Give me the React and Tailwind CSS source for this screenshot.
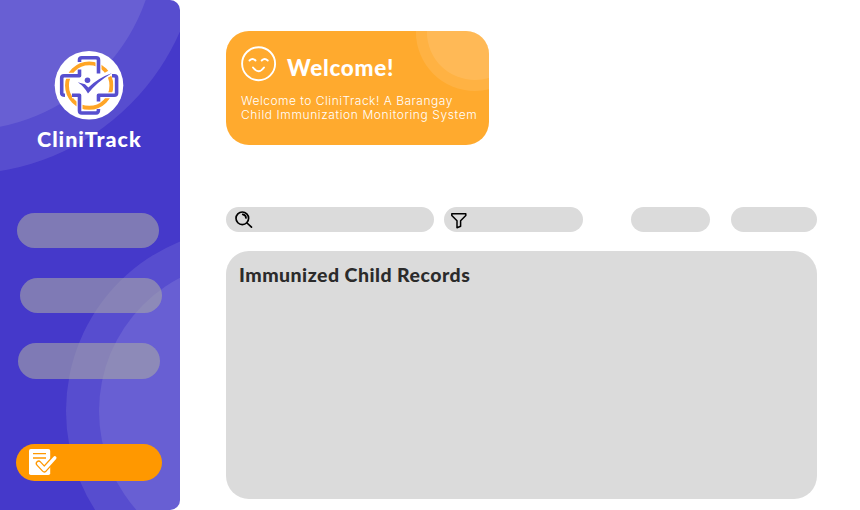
const heading = "font-[Lato,'Open_Sans',sans-serif]";

function Logo() {
  return (
    <svg className="block h-[70px] w-[70px]" viewBox="54 50 70 70" fill="none">
      <circle cx="89" cy="85.3" r="34.3" fill="#fff" />
      <circle cx="89.2" cy="85.6" r="22.2" stroke="#ffa526" strokeWidth="3.9" />
      <g stroke="#fff" strokeWidth="6">
        <path d="M79.5 71V75.8H62V95M98.5 58V73M116.5 76V95.3H98.5V99M72 95.3H79.5V113H98.5V110.5" />
        <path d="M98 80L112 72" />
      </g>
      <g stroke="#574fcf" strokeWidth="3.6" strokeLinejoin="round">
        <path d="M79.5 62V60Q79.5 57.7 81.8 57.7H96.2Q98.5 57.7 98.5 60V73.5" />
        <path d="M79.5 69.5V75.8H64Q61.7 75.8 61.7 78V93Q61.7 95.3 65 95.3" />
        <path d="M112 75.8H114.3Q116.6 75.8 116.6 78V93Q116.6 95.3 114.3 95.3H98.5V101.5" />
        <path d="M72 95.3H79.5V110.7Q79.5 113 81.8 113H96.2Q98.5 113 98.5 109" />
      </g>
      <circle cx="87.5" cy="80.2" r="2.8" fill="#574fcf" />
      <path d="M77.8 82.3L85 84.3L88.4 87.6Q97 78.5 112 73Q97 82 88 93.5Q84 86.5 77.8 82.3Z" fill="#574fcf" />
    </svg>
  );
}

function Sidebar() {
  return (
    <aside className="relative h-[510px] w-[180px] shrink-0 overflow-hidden rounded-r-[10px] bg-[#4539ca]">
      <svg className="absolute inset-0 h-full w-full" viewBox="0 0 180 510" fill="#fff" fillOpacity="0.1">
        <circle cx="-38" cy="-64" r="238" />
        <circle cx="-38" cy="-64" r="194.5" />
        <circle cx="249" cy="411" r="183" />
        <circle cx="249" cy="411" r="150" />
      </svg>
      <div className="relative flex flex-col pt-[50px]">
        <div className="ml-[54px]"><Logo /></div>
        <h1 className={`${heading} ml-[37px] mt-[5px] mb-px h-7 whitespace-nowrap text-[21.5px] leading-7 font-black tracking-[0.97px] text-white`}>CliniTrack</h1>
        <nav className="mt-[59px] flex flex-col">
          <div className="ml-[17px] h-[35px] w-[142px] rounded-full bg-[#a6a6a6]/60" />
          <div className="ml-[20px] mt-[30px] h-[35px] w-[142px] rounded-full bg-[#a6a6a6]/60" />
          <div className="ml-[18px] mt-[30px] h-[35.5px] w-[142px] rounded-full bg-[#a6a6a6]/60" />
          <div className="ml-[16px] mt-[65.5px] flex h-[36.5px] w-[146px] items-center rounded-full bg-[#ff9800] pl-[13px]">
            <svg className="h-[28px] w-[30px]" viewBox="29 448 30 28" fill="none">
              <rect x="29" y="449" width="21.2" height="26" rx="1.8" fill="#fff" />
              <path d="M33 453.6H46M33 458H46" stroke="#ff9800" strokeWidth="1.3" />
              <path d="M38.7 463.5L44.3 469.5L54.8 457.8" stroke="#ff9800" strokeWidth="6" strokeLinecap="round" strokeLinejoin="round" />
              <path d="M38.7 463.5L44.3 469.5L54.8 457.8" stroke="#fff" strokeWidth="3.4" strokeLinecap="round" strokeLinejoin="round" />
            </svg>
          </div>
        </nav>
      </div>
    </aside>
  );
}

function WelcomeCard() {
  return (
    <section className="relative h-[114px] w-[263.4px] overflow-hidden rounded-[23px] bg-[#ffaa2e]">
      <svg className="absolute inset-0 h-full w-full" viewBox="226 31 263.5 114" fill="#fff" fillOpacity="0.1">
        <circle cx="475" cy="32" r="59" />
        <circle cx="475" cy="32" r="48" />
      </svg>
      <div className="relative pl-[15px] pt-[15px]">
        <div className="flex h-9 items-center">
          <svg className="h-[36px] w-[36px] shrink-0" viewBox="241 46 36 36" fill="none" stroke="#fff" strokeWidth="1.9" strokeLinecap="round">
            <circle cx="258.6" cy="63.7" r="16.5" />
            <path d="M249.5 60.5Q252.5 57.5 255.5 60.5M261.7 60.5Q264.7 57.5 267.7 60.5M253 67.5Q258.6 75 264 67.5" />
          </svg>
          <h2 className={`${heading} ml-[10px] mt-[8px] whitespace-nowrap text-[22.5px] leading-7 font-black tracking-[0.75px] text-white`}>Welcome!</h2>
        </div>
        <p className="mt-[12px] whitespace-nowrap font-[Inter,'Noto_Sans',sans-serif] text-[12px] leading-[14px] font-light text-white">
          <span className="block tracking-[0.5px]">Welcome to CliniTrack! A Barangay</span>
          <span className="block tracking-[0.6px]">Child Immunization Monitoring System</span>
        </p>
      </div>
    </section>
  );
}

export default function App() {
  return (
    <div className="flex h-[510px] w-[860px] overflow-hidden bg-white">
      <Sidebar />
      <main className="ml-[46px] flex w-[591px] flex-col pt-[31px]">
        <WelcomeCard />
        <div className="mt-[62px] flex h-[25px]">
          <div className="flex w-[208px] items-center rounded-full bg-[#dbdbdb] pl-[8px]">
            <svg className="h-[20px] w-[20px]" viewBox="234 209.5 20 20" fill="none" stroke="#000" strokeWidth="1.7" strokeLinecap="round">
              <circle cx="242.3" cy="217.8" r="6.3" />
              <path d="M247 222.5L251.5 226.7M242.7 213.8Q246 214.5 246 217.5" />
            </svg>
          </div>
          <div className="ml-[10px] flex w-[139px] items-center rounded-full bg-[#dbdbdb] pl-[6px]">
            <svg className="h-[20px] w-[20px]" viewBox="449.7 209.5 20 20" fill="none" stroke="#000" strokeWidth="1.5" strokeLinejoin="round">
              <path d="M451.5 213.2H465.5V215L460.3 220.3V225.8L456.7 227.3V220.3L451.5 215Z" />
            </svg>
          </div>
          <div className="ml-[48px] w-[79px] rounded-full bg-[#dbdbdb]" />
          <div className="ml-[21.4px] w-[85.6px] rounded-full bg-[#dbdbdb]" />
        </div>
        <section className="mt-[19px] h-[248px] rounded-[23px] bg-[#dbdbdb] pl-[13px] pt-[10px]">
          <h2 className={`${heading} whitespace-nowrap text-[19.5px] leading-7 font-black tracking-[0.47px] text-[#2b2b2b]`}>Immunized Child Records</h2>
        </section>
      </main>
    </div>
  );
}
